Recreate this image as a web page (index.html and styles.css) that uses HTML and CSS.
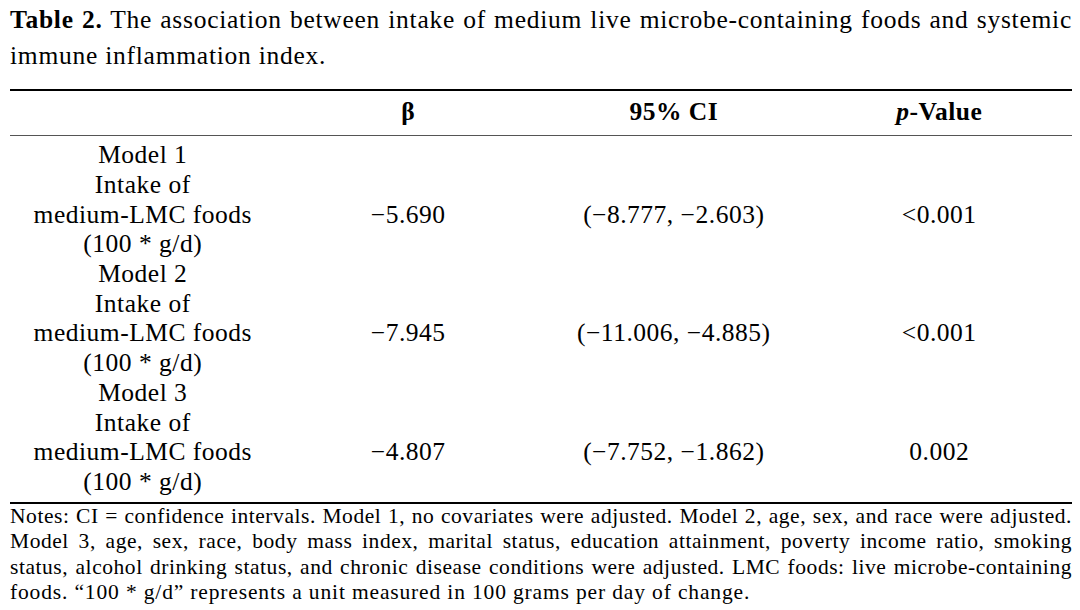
FILE: index.html
```html
<!DOCTYPE html>
<html lang="en">
<head>
<meta charset="utf-8">
<title>Table 2</title>
<link rel="stylesheet" href="styles.css">
</head>
<body>
<div class="page">
  <p class="caption">
    <span class="line"><b>Table 2.</b> The association between intake of medium live microbe-containing foods and systemic</span>
    <span class="line-last">immune inflammation index.</span>
  </p>
  <table class="data">
    <thead>
      <tr>
        <th></th>
        <th>β</th>
        <th>95% CI</th>
        <th><i>p</i>-Value</th>
      </tr>
    </thead>
    <tbody>
      <tr class="model first">
        <td>Model 1</td><td></td><td></td><td></td>
      </tr>
      <tr class="values">
        <td>Intake of<br>medium-LMC foods<br>(100 * g/d)</td>
        <td>−5.690</td>
        <td>(−8.777, −2.603)</td>
        <td>&lt;0.001</td>
      </tr>
      <tr class="model">
        <td>Model 2</td><td></td><td></td><td></td>
      </tr>
      <tr class="values">
        <td>Intake of<br>medium-LMC foods<br>(100 * g/d)</td>
        <td>−7.945</td>
        <td>(−11.006, −4.885)</td>
        <td>&lt;0.001</td>
      </tr>
      <tr class="model">
        <td>Model 3</td><td></td><td></td><td></td>
      </tr>
      <tr class="values last">
        <td>Intake of<br>medium-LMC foods<br>(100 * g/d)</td>
        <td>−4.807</td>
        <td>(−7.752, −1.862)</td>
        <td>0.002</td>
      </tr>
    </tbody>
  </table>
  <div class="notes">
    <span class="line">Notes: CI = confidence intervals. Model 1, no covariates were adjusted. Model 2, age, sex, and race were adjusted.</span>
    <span class="line">Model 3, age, sex, race, body mass index, marital status, education attainment, poverty income ratio, smoking</span>
    <span class="line">status, alcohol drinking status, and chronic disease conditions were adjusted. LMC foods: live microbe-containing</span>
    <span class="line-last">foods. “100 * g/d” represents a unit measured in 100 grams per day of change.</span>
  </div>
</div>
</body>
</html>
```

FILE: styles.css
```css
html, body {
  margin: 0;
  padding: 0;
  background: #ffffff;
}

body {
  font-family: "Liberation Serif", "Times New Roman", serif;
  color: #000000;
}

.page {
  width: 1062px;
  margin: 0 8px 0 10px;
}

.line {
  display: block;
  white-space: nowrap;
  text-align: justify;
  text-align-last: justify;
}

.line-last {
  display: block;
  white-space: nowrap;
  text-align: left;
}

.caption {
  margin: 2px 0 0 0;
  font-size: 25.5px;
  letter-spacing: 0.75px;
  line-height: 36px;
}

.caption b {
  font-weight: bold;
}

.data {
  width: 1062px;
  margin-top: 15px;
  border-collapse: collapse;
  table-layout: fixed;
  border-top: 2px solid #000;
  border-bottom: 2px solid #000;
  font-size: 25.5px;
  letter-spacing: 0.5px;
  line-height: 29.7px;
}

.data th,
.data td {
  width: 25%;
  padding: 0;
  text-align: center;
  vertical-align: middle;
}

.data thead th {
  font-weight: bold;
  padding-top: 6px;
  padding-bottom: 8px;
  border-bottom: 1px solid #555;
}

.data tr.first td {
  padding-top: 4.5px;
}

.data tr.last td {
  padding-bottom: 5px;
}

.notes {
  font-size: 21.5px;
  letter-spacing: 0.55px;
  line-height: 25.5px;
}

.notes .line-last {
  letter-spacing: 0.85px;
}
```
